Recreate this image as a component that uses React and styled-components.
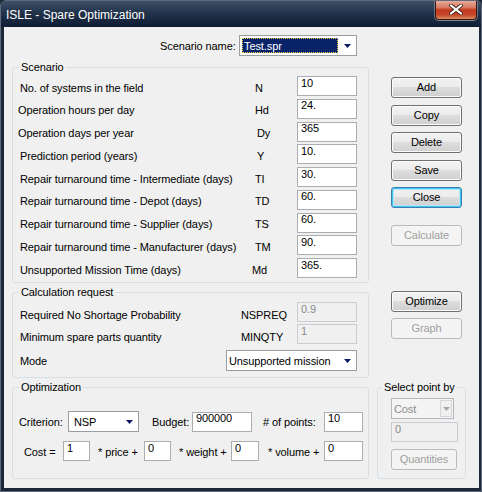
import React from "react";
import styled, { createGlobalStyle, css } from "styled-components";

const GlobalStyle = createGlobalStyle`
  html, body {
    margin: 0;
    padding: 0;
    background: #1c2838;
  }
  * {
    box-sizing: border-box;
  }
`;

const uiFont = `"Liberation Sans", Arial, sans-serif`;

const Window = styled.div`
  width: 482px;
  height: 492px;
  display: flex;
  flex-direction: column;
  background: #1c2838;
  border: 1px solid #5f6b7c;
  border-radius: 6px 6px 0 0;
  overflow: hidden;
  font-family: ${uiFont};
  font-size: 11px;
  letter-spacing: -0.1px;
  color: #000;
`;

const TitleBar = styled.div`
  height: 26px;
  flex: none;
  display: flex;
  align-items: flex-start;
  justify-content: space-between;
  padding-left: 5px;
  background: linear-gradient(#3e4f68 0%, #22334c 45%, #0f1d33 100%);
`;

const TitleText = styled.div`
  align-self: center;
  padding-top: 2px;
  color: #fff;
  font-size: 12px;
  letter-spacing: 0;
`;

const CloseButton = styled.div`
  width: 42px;
  height: 20px;
  margin: -1px 4px 0 0;
  display: flex;
  align-items: center;
  justify-content: center;
  border: 1px solid #3a1610;
  border-top: none;
  border-radius: 0 0 4px 4px;
  background: linear-gradient(#e9b0a2 0%, #d87a63 40%, #c23a1e 52%, #c5472a 78%, #e08d62 100%);
  box-shadow: 0 1px 0 rgba(255, 255, 255, 0.45), -1px 0 0 rgba(255, 255, 255, 0.3),
    1px 0 0 rgba(255, 255, 255, 0.3);
`;

const Client = styled.div`
  flex: 1;
  margin: 0 2px 3px 3px;
  background: #f0f0f0;
  padding: 8px 0 0 8px;
`;

const NameRow = styled.div`
  display: flex;
  align-items: center;
  padding-left: 148px;
`;

const NameLabel = styled.span`
  width: 79px;
`;

const Combo = styled.div`
  display: flex;
  align-items: stretch;
  width: ${(p) => p.$w}px;
  height: 21px;
  padding: 1px;
  border: 1px solid ${(p) => (p.$disabled ? "#b4b8bc" : "#9a9da2")};
  background: ${(p) => (p.$disabled ? "#f4f4f4" : "#fff")};
  color: ${(p) => (p.$disabled ? "#8d8d8d" : "#000")};
`;

const ComboValue = styled.span`
  flex: 1;
  display: flex;
  align-items: center;
  margin: 1px;
  padding: 0 1px;
  white-space: nowrap;
  ${(p) =>
    p.$selected
      ? css`
          background: #0a246a;
          color: #fff;
          border: 1px dotted #f3d34a;
        `
      : css`
          padding: 0;
        `}
`;

const ComboButton = styled.span`
  width: ${(p) => p.$w}px;
  display: flex;
  align-items: center;
  justify-content: center;
  ${(p) =>
    p.$disabled &&
    css`
      margin-left: 3px;
      border: 1px solid #d4d6d9;
      background: #f0f0f0;
    `}
`;

const Body = styled.div`
  display: grid;
  grid-template-columns: 357px 89px;
  column-gap: 8px;
  row-gap: 3px;
  align-items: start;
  margin-top: 5px;
`;

const Group = styled.fieldset`
  margin: 0;
  padding: 0;
  min-width: 0;
  height: ${(p) => p.$h}px;
  border: 1px solid #d5dfe5;
  border-radius: 3px;
`;

const Legend = styled.legend`
  margin-left: ${(p) => p.$ml}px;
  padding: 0 2px;
  line-height: 13px;
`;

const ParamGrid = styled.div`
  display: grid;
  grid-template-columns: 235px 42px 60px;
  grid-auto-rows: 20px;
  row-gap: 2.75px;
  align-items: center;
  padding: 2px 0 0 7px;
`;

const Label = styled.span`
  padding-top: ${(p) => p.$drop || 0}px;
  margin-left: ${(p) => p.$shift || 0}px;
  white-space: nowrap;
`;

const Code = styled.span`
  padding-top: 3px;
  margin-left: ${(p) => p.$shift || 0}px;
`;

const Field = styled.input`
  width: ${(p) => p.$w || 60}px;
  height: 20px;
  margin: 0;
  padding: 0 2px 7px 3px;
  border: 1px solid ${(p) => (p.disabled ? "#c9cdd1" : "#abadb3")};
  border-radius: 0;
  background: ${(p) => (p.disabled ? "#f0f0f0" : "#fff")};
  color: ${(p) => (p.disabled ? "#8a8a8a" : "#000")};
  font: inherit;
  letter-spacing: inherit;
  outline: none;
`;

const CalcBody = styled.div`
  display: flex;
  flex-direction: column;
  gap: 2px;
  padding: 3px 11px 0 7px;
`;

const CalcRow = styled.div`
  display: flex;
  align-items: center;
  margin-top: ${(p) => p.$mt || 0}px;
`;

const CalcLabel = styled.span`
  flex: 1;
  padding-top: ${(p) => p.$drop || 0}px;
`;

const CalcCode = styled.span`
  width: 56px;
  padding-top: 5px;
`;

const OptBody = styled.div`
  display: flex;
  flex-direction: column;
  gap: 9px;
  padding: 17px 0 0 6px;
`;

const OptRow = styled.div`
  display: flex;
  align-items: center;
`;

const Text = styled.span`
  width: ${(p) => p.$w}px;
  padding-left: ${(p) => p.$pl || 0}px;
  padding-top: 1px;
  white-space: nowrap;
`;

const PickBody = styled.div`
  display: flex;
  flex-direction: column;
  gap: 3px;
  padding: 4px 0 0 13px;
`;

const ButtonStack = styled.div`
  display: flex;
  flex-direction: column;
  gap: ${(p) => p.$gap}px;
  padding: ${(p) => p.$top}px 0 0 14px;
`;

const Button = styled.button`
  width: ${(p) => p.$w || 71}px;
  height: 21px;
  margin: ${(p) => p.$mt || 0}px 0 0;
  padding: 0 0 1px;
  font: inherit;
  letter-spacing: inherit;
  color: #000;
  border: 1px solid #707070;
  border-radius: 3px;
  background: linear-gradient(#f2f2f2 0%, #ebebeb 49%, #dddddd 50%, #cfcfcf 100%);
  box-shadow: inset 0 0 0 1px #fcfcfc;
  ${(p) =>
    p.$default &&
    css`
      border-color: #3c7fb1;
      box-shadow: inset 0 0 0 1px #40c4f0, inset 0 0 0 2px #b4e6f8;
    `}
  &:disabled {
    color: #a0a0a0;
    border-color: #b8bcbf;
    background: #f4f4f4;
    box-shadow: none;
  }
`;

const Arrow = ({ color = "#0a1a66" }) => (
  <svg width="7" height="4" viewBox="0 0 7 4">
    <path d="M0 0h7L3.5 4z" fill={color} />
  </svg>
);

const CloseGlyph = () => (
  <svg width="14" height="11" viewBox="0 0 14 11">
    <path d="M2 1.5l10 8M12 1.5l-10 8" stroke="#4a2a26" strokeWidth="4" strokeLinecap="round" />
    <path d="M2 1.5l10 8M12 1.5l-10 8" stroke="#fff" strokeWidth="2.2" strokeLinecap="round" />
  </svg>
);

const scenario = [
  { label: "No. of systems in the field", code: "N", value: "10" },
  { label: "Operation hours per day", code: "Hd", value: "24.", shift: -2 },
  { label: "Operation days per year", code: "Dy", value: "365", shift: -2, codeShift: 2 },
  { label: "Prediction period (years)", code: "Y", value: "10.", codeShift: 2 },
  { label: "Repair turnaround time - Intermediate (days)", code: "TI", value: "30." },
  { label: "Repair turnaround time - Depot (days)", code: "TD", value: "60." },
  { label: "Repair turnaround time - Supplier (days)", code: "TS", value: "60." },
  { label: "Repair turnaround time - Manufacturer (days)", code: "TM", value: "90." },
  { label: "Unsupported Mission Time (days)", code: "Md", value: "365.", codeShift: -3 },
];

const requests = [
  { label: "Required No Shortage Probability", code: "NSPREQ", value: "0.9" },
  { label: "Minimum spare parts quantity", code: "MINQTY", value: "1" },
];

export default function App() {
  return (
    <>
      <GlobalStyle />
      <Window>
        <TitleBar>
          <TitleText>ISLE - Spare Optimization</TitleText>
          <CloseButton>
            <CloseGlyph />
          </CloseButton>
        </TitleBar>
        <Client>
          <NameRow>
            <NameLabel>Scenario name:</NameLabel>
            <Combo $w={118}>
              <ComboValue $selected>Test.spr</ComboValue>
              <ComboButton $w={16}>
                <Arrow />
              </ComboButton>
            </Combo>
          </NameRow>

          <Body>
            <Group $h={222}>
              <Legend $ml={6}>Scenario</Legend>
              <ParamGrid>
                {scenario.map((row) => (
                  <React.Fragment key={row.code}>
                    <Label $drop={3} $shift={row.shift}>
                      {row.label}
                    </Label>
                    <Code $shift={row.codeShift}>{row.code}</Code>
                    <Field defaultValue={row.value} />
                  </React.Fragment>
                ))}
              </ParamGrid>
            </Group>
            <ButtonStack $top={16} $gap={6.5}>
              <Button>Add</Button>
              <Button>Copy</Button>
              <Button>Delete</Button>
              <Button>Save</Button>
              <Button $default>Close</Button>
              <Button $mt={10.5} disabled>
                Calculate
              </Button>
            </ButtonStack>

            <Group $h={92}>
              <Legend $ml={6}>Calculation request</Legend>
              <CalcBody>
                {requests.map((row) => (
                  <CalcRow key={row.code}>
                    <CalcLabel $drop={5}>{row.label}</CalcLabel>
                    <CalcCode>{row.code}</CalcCode>
                    <Field disabled defaultValue={row.value} />
                  </CalcRow>
                ))}
                <CalcRow $mt={4}>
                  <CalcLabel $drop={1}>Mode</CalcLabel>
                  <Combo $w={131}>
                    <ComboValue>Unsupported mission</ComboValue>
                    <ComboButton $w={16}>
                      <Arrow />
                    </ComboButton>
                  </Combo>
                </CalcRow>
              </CalcBody>
            </Group>
            <ButtonStack $top={5} $gap={6}>
              <Button>Optimize</Button>
              <Button disabled>Graph</Button>
            </ButtonStack>

            <Group $h={98}>
              <Legend $ml={6}>Optimization</Legend>
              <OptBody>
                <OptRow>
                  <Text $w={49}>Criterion:</Text>
                  <Combo $w={71}>
                    <ComboValue>&nbsp;NSP</ComboValue>
                    <ComboButton $w={16}>
                      <Arrow />
                    </ComboButton>
                  </Combo>
                  <Text $w={53} $pl={13}>
                    Budget:
                  </Text>
                  <Field $w={60} defaultValue="900000" />
                  <Text $w={72} $pl={11}>
                    # of points:
                  </Text>
                  <Field $w={39} defaultValue="10" />
                </OptRow>
                <OptRow>
                  <Text $w={44} $pl={5}>
                    Cost =
                  </Text>
                  <Field $w={27} defaultValue="1" />
                  <Text $w={54} $pl={8}>
                    * price +
                  </Text>
                  <Field $w={27} defaultValue="0" />
                  <Text $w={60} $pl={8}>
                    * weight +
                  </Text>
                  <Field $w={28} defaultValue="0" />
                  <Text $w={65} $pl={9}>
                    * volume +
                  </Text>
                  <Field $w={39} defaultValue="0" />
                </OptRow>
              </OptBody>
            </Group>

            <Group $h={98}>
              <Legend $ml={4}>Select point by</Legend>
              <PickBody>
                <Combo $w={63} $disabled>
                  <ComboValue>Cost</ComboValue>
                  <ComboButton $w={12} $disabled>
                    <Arrow color="#a8a8a8" />
                  </ComboButton>
                </Combo>
                <Field $w={67} disabled defaultValue="0" />
                <Button $w={66} $mt={4} disabled>
                  Quantities
                </Button>
              </PickBody>
            </Group>
          </Body>
        </Client>
      </Window>
    </>
  );
}
